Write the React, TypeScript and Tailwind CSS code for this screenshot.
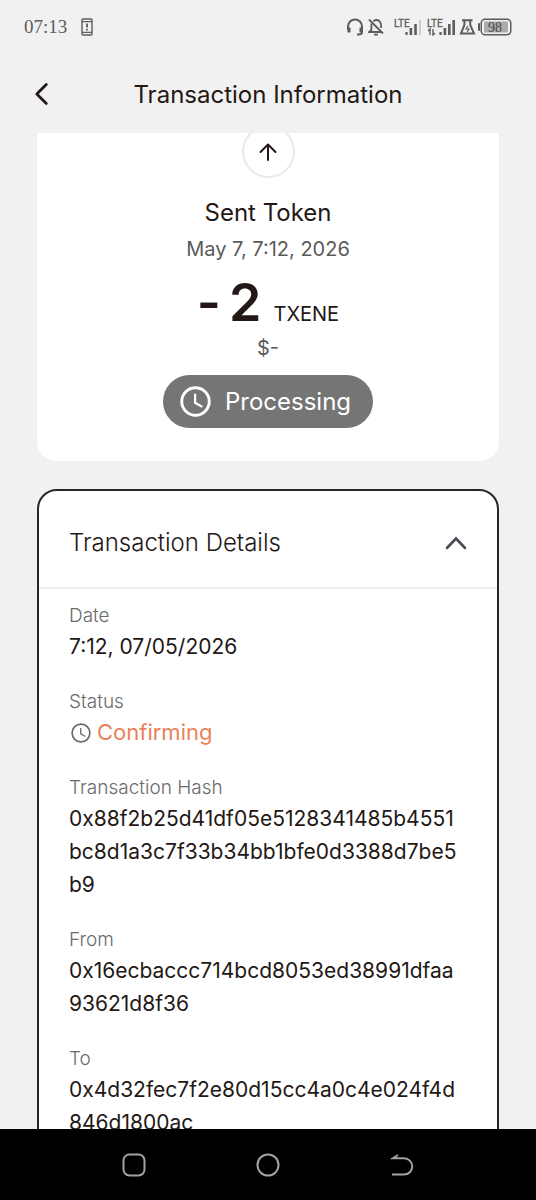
import React, { useState } from 'react';

interface DetailItem {
  label: string;
  value: string;
  pending?: boolean;
}

const details: DetailItem[] = [
  { label: 'Date', value: '7:12, 07/05/2026' },
  { label: 'Status', value: 'Confirming', pending: true },
  {
    label: 'Transaction Hash',
    value: '0x88f2b25d41df05e5128341485b4551bc8d1a3c7f33b34bb1bfe0d3388d7be5b9',
  },
  { label: 'From', value: '0x16ecbaccc714bcd8053ed38991dfaa93621d8f36' },
  { label: 'To', value: '0x4d32fec7f2e80d15cc4a0c4e024f4d846d1800ac' },
];

const ClockIcon: React.FC<{ className?: string; strokeWidth: number }> = ({ className, strokeWidth }) => (
  <svg viewBox="0 0 30 30" fill="none" stroke="currentColor" strokeWidth={strokeWidth} className={className}>
    <circle cx="15" cy="15" r="13.3" />
    <path d="M14.6 7.5v8.7l7 4" strokeWidth={strokeWidth - 0.6} />
  </svg>
);

const StatusBar: React.FC = () => (
  <div className="flex h-[54px] shrink-0 items-center justify-between px-6 text-[#5c5c5c]">
    <div className="flex items-center gap-3.5">
      <span className="font-['Liberation_Serif',serif] text-[19px]">07:13</span>
      <svg width="12" height="18" viewBox="0 0 12 18" fill="none" stroke="currentColor" strokeWidth="1.4">
        <rect x="1" y="1" width="10" height="16" rx="1" />
        <path d="M1 3.6h10M1 14.4h10" />
        <path d="M6 5.6v4M6 10.8v1.8" strokeWidth="1.8" />
      </svg>
    </div>
    <div className="flex items-center">
      {/* Headset */}
      <svg width="18" height="18" viewBox="0 0 18 18" fill="none" stroke="currentColor" strokeWidth="2">
        <path d="M2 12V8.5a7 7 0 0 1 14 0V14q0 2.5-3.5 2.5H11" />
        <path d="M3 9.5v5M15 9.5v5" strokeWidth="3" />
      </svg>
      {/* Muted bell */}
      <svg className="ml-1" width="18" height="18" viewBox="0 0 18 18" fill="none" stroke="currentColor" strokeWidth="1.8">
        <path d="M3.4 5.5V12L1.2 14h12.5M5.4 3.2Q8.500 .7 11.5 3.2 13.2 5 13.2 10" />
        <path d="M1 1.5l14 14M6 16.6h4" />
      </svg>
      {/* Signal, first sim */}
      <svg className="ml-2" width="29" height="18" viewBox="0 0 29 18" fill="currentColor">
        <text x="0" y="9" fontSize="10" stroke="currentColor" strokeWidth="0.3" fontFamily="Roboto, sans-serif">
          LTE
        </text>
        <path d="M11.4 14h2.2v3h-2.200zM15.600 10h2.600v7h-2.600zM20.200 6h2.600v11h-2.600z" />
        <path d="M25 2h2v15h-2z" opacity="0.25" />
      </svg>
      {/* Signal, second sim */}
      <svg className="ml-1" width="32" height="18" viewBox="0 0 32 18" fill="currentColor">
        <text x="0" y="9" fontSize="10" stroke="currentColor" strokeWidth="0.3" fontFamily="Roboto, sans-serif">
          LTE
        </text>
        <path d="M12.4 14h2.2v3h-2.2zM16.6 10h2.6v7h-2.6zM21 6h2.6v11H21zM25.4 2H28v15h-2.6z" />
        <path d="M1 13l2-2v6M6 11v6l2-2" fill="none" stroke="currentColor" strokeWidth="1.4" />
      </svg>
      {/* Flask */}
      <svg width="17" height="18" viewBox="0 0 17 18" fill="none" stroke="currentColor" strokeWidth="2">
        <path d="M3 2.2h10.5M5.4 2.5v4.3L2 15.6h13L11.2 6.8V2.5" />
        <path d="M9 8l-2 3h3l-1.800 3" strokeWidth="1.2" />
      </svg>
      {/* Battery */}
      <svg className="ml-0.5" width="34" height="18" viewBox="0 0 34 18">
        <rect x="0" y="5" width="2" height="8" rx="1" fill="currentColor" />
        <rect x="3.2" y="1.2" width="29.6" height="15.6" rx="4" fill="none" stroke="currentColor" strokeWidth="1.5" />
        <rect x="6" y="3.5" width="24" height="11" rx="1" fill="#ababab" />
        <text x="17" y="13.5" textAnchor="middle" fontSize="14" fontFamily="Liberation Serif, serif" fill="#4a4a4a">
          98
        </text>
      </svg>
    </div>
  </div>
);

const Header: React.FC = () => (
  <header className="relative flex h-[79px] shrink-0 items-center justify-center">
    <button type="button" aria-label="Back" className="absolute left-[34px] text-[#231815]">
      <svg width="16" height="24" viewBox="0 0 16 24" fill="none" stroke="currentColor" strokeWidth="2.8" strokeLinecap="round" strokeLinejoin="round">
        <path d="M12.3 2.5L2.8 12l9.5 9.5" />
      </svg>
    </button>
    <h1 className="pt-0.5 text-2xl">Transaction Information</h1>
  </header>
);

const SummaryCard: React.FC = () => (
  <section className="flex shrink-0 flex-col items-center overflow-hidden rounded-b-[20px] bg-white pb-[33px]">
    <div className="-mt-2 flex size-[53px] items-center justify-center rounded-full border-2 border-[#e9e9e9]">
      <svg width="18" height="18" viewBox="0 0 18 18" fill="none" stroke="#231815" strokeWidth="2" strokeLinecap="round" strokeLinejoin="round">
        <path d="M9 17V1.5M1.5 9L9 1.5 16.5 9" />
      </svg>
    </div>
    <h2 className="mt-5 text-2xl leading-[30px]">Sent Token</h2>
    <p className="mt-1.5 text-xl leading-[30px] text-[#5a5a5a]">May 7, 7:12, 2026</p>
    <p className="mt-3 flex items-baseline gap-3 leading-[54px]">
      <span className="flex gap-2 text-[52px] font-semibold">
        <span>-</span>
        <span>2</span>
      </span>
      <span className="text-xl leading-none">TXENE</span>
    </p>
    <p className="mt-[3px] text-xl leading-[30px] text-[#5a5a5a]">$-</p>
    <div className="mt-3 flex h-[53px] items-center gap-3.5 rounded-full bg-[#757575] pr-[22px] pl-[17px] text-white">
      <ClockIcon className="size-[31px]" strokeWidth={2.8} />
      <span className="text-2xl">Processing</span>
    </div>
  </section>
);

const DetailsCard: React.FC = () => {
  const [open, setOpen] = useState(true);

  return (
    <section className="mt-7 shrink-0 rounded-[20px] border-2 border-[#2b2523] bg-white pb-6">
      <button
        type="button"
        aria-expanded={open}
        onClick={() => setOpen(!open)}
        className="flex h-[98px] w-full items-center justify-between border-b-2 border-[#ececec] px-[30px] pt-2"
      >
        <span className="text-2xl font-light">Transaction Details</span>
        <svg width="22" height="14" viewBox="0 0 22 14" fill="none" stroke="#4c4c54" strokeWidth="2.6" strokeLinecap="round">
          <path d="M2 12l9-9.5L20 12" />
        </svg>
      </button>
      {open && (
        <dl className="flex flex-col gap-6 px-[30px] pt-3">
          {details.map((item) => (
            <div key={item.label}>
              <dt className="text-[19px] leading-[29px] font-light text-[#6b6b6b]">{item.label}</dt>
              {item.pending ? (
                <dd className="flex items-center gap-1 text-[22px] leading-[33px] text-[#ea8158]">
                  <ClockIcon className="size-6 p-0.5 text-[#6b6b6b]" strokeWidth={2.6} />
                  {item.value}
                </dd>
              ) : (
                <dd className="pr-1 text-[21px] leading-[33px] break-all">{item.value}</dd>
              )}
            </div>
          ))}
        </dl>
      )}
    </section>
  );
};

const SystemNav: React.FC = () => (
  <nav className="grid h-[71px] shrink-0 grid-cols-3 items-center justify-items-center bg-black px-[67px] text-[#a3a3a3]">
    <button type="button" aria-label="Recent apps">
      <svg width="24" height="24" viewBox="0 0 24 24" fill="none" stroke="currentColor" strokeWidth="2">
        <rect x="1.5" y="1.5" width="21" height="21" rx="6" />
      </svg>
    </button>
    <button type="button" aria-label="Home">
      <svg width="24" height="24" viewBox="0 0 24 24" fill="none" stroke="currentColor" strokeWidth="2">
        <circle cx="12" cy="12" r="10.5" />
      </svg>
    </button>
    <button type="button" aria-label="Go back">
      <svg width="24" height="24" viewBox="0 0 24 24" fill="none" stroke="currentColor" strokeWidth="2">
        <path d="M8 2L3 5.2h11a8.2 8.2 0 0 1 0 16.4H2" />
      </svg>
    </button>
  </nav>
);

export default function App() {
  return (
    <div className="flex h-screen flex-col bg-[#f1f1f1] font-[Inter,sans-serif] text-[#231815]">
      <StatusBar />
      <Header />
      <main className="flex min-h-0 flex-1 flex-col overflow-hidden px-[37px]">
        <SummaryCard />
        <DetailsCard />
      </main>
      <SystemNav />
    </div>
  );
}
